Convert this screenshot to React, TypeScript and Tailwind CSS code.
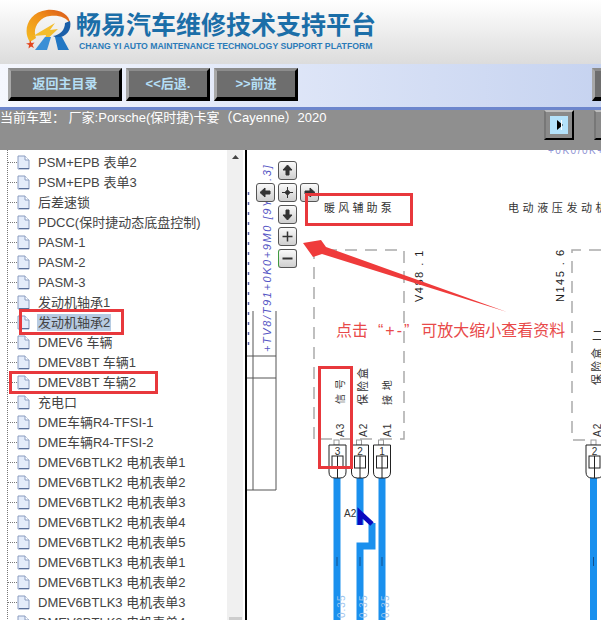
const CJK = "font-['Liberation_Sans','Noto_Sans_CJK_SC',sans-serif]";

const treeItems = [
  'PSM+EPB 表单2',
  'PSM+EPB 表单3',
  '后差速锁',
  'PDCC(保时捷动态底盘控制)',
  'PASM-1',
  'PASM-2',
  'PASM-3',
  '发动机轴承1',
  '发动机轴承2',
  'DMEV6 车辆',
  'DMEV8BT 车辆1',
  'DMEV8BT 车辆2',
  '充电口',
  'DME车辆R4-TFSI-1',
  'DME车辆R4-TFSI-2',
  'DMEV6BTLK2 电机表单1',
  'DMEV6BTLK2 电机表单2',
  'DMEV6BTLK2 电机表单3',
  'DMEV6BTLK2 电机表单4',
  'DMEV6BTLK2 电机表单5',
  'DMEV6BTLK3 电机表单1',
  'DMEV6BTLK3 电机表单2',
  'DMEV6BTLK3 电机表单3',
  'DMEV6BTLK3 电机表单4',
];

function Logo() {
  return (
    <svg width="50" height="44" viewBox="0 0 50 44" className="shrink-0">
      <defs>
        <linearGradient id="ring" x1="0" y1="1" x2="1" y2="0">
          <stop offset="0" stopColor="#f4bc22" />
          <stop offset="0.55" stopColor="#f0901a" />
          <stop offset="1" stopColor="#d8541a" />
        </linearGradient>
      </defs>
      <path d="M5 33 C-3 22 3 3 22 1 C34 0 45 5 45 15 C42 8 33 6 25 7 C14 8 7 20 11 29 Z" fill="url(#ring)" />
      <path d="M5 31l1.500 3 3-.5-2 2.500 1.500 3-3-1.500-2.500 2 .5-3.500-3-1.500 3.500-.5z" fill="#e2451f" />
      <path d="M8 27 L30 14 L25 21 L33 20 L19 33 L21 26 Z" fill="#f4bd2c" />
      <path d="M20 28 L26 28 L22 41 L10 41 Z" fill="#3a8fd6" />
      <path d="M45 12 C47 20 42 28 32 29 L28 27 C35 26 40 21 40 14 Z" fill="#1b5fa8" />
      <path d="M30 28 L37 28 L44 41 L33 41 Z" fill="#2277c4" />
    </svg>
  );
}

function NavButton({ label, className }: { label: string; className: string }) {
  return (
    <button
      className={`h-[33px] shrink-0 bg-[#6e6e6e] border-l-[3px] border-t-[3px] border-r-[3px] border-b-[4px] border-l-[#a8a8a8] border-t-[#8c8c8c] border-r-black border-b-black text-[13px] font-bold text-[#b5def5] ${className}`}
    >
      {label}
    </button>
  );
}

function PageIcon() {
  return (
    <svg width="13" height="15" viewBox="0 0 13 15" className="shrink-0">
      <path d="M1 1h7l4 4v9H1z" fill="#e4ecfa" stroke="#8a9cc0" />
      <path d="M8 1v4h4" fill="#fff" stroke="#8a9cc0" />
      <path d="M2 13.500h10" stroke="#5a6f99" />
    </svg>
  );
}

function TreeRow({ label, selected }: { label: string; selected: boolean }) {
  return (
    <div className="flex h-5 items-center">
      <div className="w-[10px] ml-[7px] border-t border-dotted border-[#777]" />
      <PageIcon />
      <span
        className={`ml-[7px] px-[1px] leading-[17px] whitespace-nowrap text-[13px] text-[#444] ${selected ? 'bg-[#b7cbe2]' : ''}`}
      >
        {label}
      </span>
    </div>
  );
}

function PadButton({ children, className = '' }: { children?: React.ReactNode; className?: string }) {
  return (
    <button
      className={`flex h-[19px] w-[19px] items-center justify-center rounded-[3px] border border-[#555] bg-gradient-to-b from-[#fafafa] to-[#cfcfcf] ${className}`}
    >
      <svg width="13" height="13" viewBox="0 0 13 13" fill="#333" stroke="#333">
        {children}
      </svg>
    </button>
  );
}

function Connector({ x, num }: { x: number; num: string }) {
  return (
    <g fill="none" stroke="#222" strokeWidth="1">
      <rect x={x + 5} y="440" width="5" height="5" stroke="#999" />
      <path d={`M${x} 445h17v27q0 6-6 6h-5q-6 0-6-6z`} fill="#fff" />
      <rect x={x + 3} y="456" width="11" height="12" />
      <path d={`M${x + 8.5} 456v22`} />
      <text x={x + 8.5} y="455" fontSize="10" textAnchor="middle" fill="#333" stroke="none">
        {num}
      </text>
    </g>
  );
}

function VLabel({ x, y, text, size = 10, fill = '#333', spacing = 1, italic = false }: { x: number; y: number; text: string; size?: number; fill?: string; spacing?: number; italic?: boolean }) {
  return (
    <text
      transform={`translate(${x} ${y}) rotate(-90)`}
      fontSize={size}
      fill={fill}
      letterSpacing={spacing}
      fontStyle={italic ? 'italic' : 'normal'}
      fontFamily="'Liberation Sans','Noto Sans CJK SC',sans-serif"
    >
      {text}
    </text>
  );
}

function Diagram() {
  return (
    <svg width="354" height="470" viewBox="247 150 354 470" className="absolute left-0 top-0">
      {/* title block on the left edge */}
      <g fill="none" stroke="#555" strokeWidth="1">
        <path d="M253 311V490M276 311V490M247 356H276M247 378H276M247 490H276" />
      </g>
      <VLabel x={271} y={352} text="+TV8/T91+0K0+9M0 [9Y0...3]" size={11} fill="#5555c4" spacing={1.6} italic />
      <path d="M248.500 192v160" stroke="#5d66a8" strokeWidth="1.500" strokeDasharray="3 7" />
      <text x="548" y="154" fontSize="10" fill="#8f94d4" letterSpacing="1.500">+0K0/0K+</text>

      {/* component boxes */}
      <g fill="none" stroke="#aaa" strokeWidth="1.500" strokeDasharray="12 8">
        <path d="M314 439V250H404V439H314" />
        <path d="M601 250H572V440H585" />
      </g>

      <text x="324" y="212" fontSize="11" fill="#333" letterSpacing="3.200" fontFamily="'Noto Sans CJK SC',sans-serif">暖风辅助泵</text>
      <text x="508" y="212" fontSize="11" fill="#333" letterSpacing="3.600" fontFamily="'Noto Sans CJK SC',sans-serif">电动液压发动机</text>

      <VLabel x={423} y={302} text="V488 . 1" size={11} fill="#222" spacing={1.500} />
      <VLabel x={564} y={302} text="N145 . 6" size={11} fill="#222" spacing={1.500} />

      <VLabel x={344} y={404} text="信 号" />
      <VLabel x={367} y={405} text="保险盒" size={11} spacing={2} />
      <VLabel x={391} y={405} text="接 地" />
      <VLabel x={344} y={437} text="A3" />
      <VLabel x={367} y={437} text="A2" />
      <VLabel x={391} y={437} text="A1" />
      <VLabel x={601} y={437} text="A2" />
      <text x="592" y="340" fontSize="12" fill="#333">二</text>
      <VLabel x={601} y={385} text="保险盒" size={11} spacing={2} />

      {/* wires */}
      <g fill="none" stroke="#1a90ee" strokeWidth="7">
        <path d="M337 478V620" />
        <path d="M360 478V525M372 523V546H360V620" />
        <path d="M382 478V620" />
        <path d="M593.500 478V620" />
      </g>
      <path d="M360 525V513L372 524" fill="none" stroke="#0a0ac0" strokeWidth="5" />
      <text x="344" y="517" fontSize="10" fill="#333">A2</text>
      <path d="M337 557v9M360 557v9M382 557v9M593.500 557v9" stroke="#12508c" strokeWidth="1" />
      <VLabel x={345} y={618} text="0.35" fill="#9cc4ee" />
      <VLabel x={367} y={618} text="0.35" fill="#9cc4ee" />
      <VLabel x={389} y={618} text="0.35" fill="#9cc4ee" />

      <Connector x={329} num="3" />
      <Connector x={351.5} num="2" />
      <Connector x={373.5} num="1" />
      <Connector x={586} num="2" />

      {/* red callout arrow */}
      <polygon points="303,243 321,240 326,247 507,312 322,254 313,257" fill="#ef3b3b" />
    </svg>
  );
}

export default function App() {
  return (
    <div className={`relative h-[620px] w-[601px] overflow-hidden bg-white ${CJK}`}>
      {/* Header */}
      <div className="flex h-[64px] items-start bg-gradient-to-b from-white to-[#dcdcdc] pl-[25px] pt-[9px]">
        <Logo />
        <div className="ml-[1px] flex flex-col">
          <div className="text-[25px] leading-[32px] font-bold whitespace-nowrap text-[#1b6ea8]">
            畅易汽车维修技术支持平台
          </div>
          <div className="ml-[3px] text-[8.7px] leading-[11px] font-bold whitespace-nowrap text-[#2b7bb9]">
            CHANG YI AUTO MAINTENANCE TECHNOLOGY SUPPORT PLATFORM
          </div>
        </div>
      </div>

      {/* Nav bar */}
      <div className="flex h-[46px] items-start gap-1 border-b-[3px] border-b-[#6d86cc] bg-gradient-to-r from-[#f5f7fe] to-[#c6d3f0] pl-2 pt-1">
        <NavButton label="返回主目录" className="w-[114px]" />
        <NavButton label="<<后退." className="w-[84px]" />
        <NavButton label=">>前进" className="w-[84px]" />
        <NavButton label="" className="ml-[290px] w-[30px]" />
      </div>

      {/* Current vehicle bar */}
      <div className="flex h-[40px] items-start bg-[#8f8f8f]">
        <div className="w-[326px] shrink-0 text-[13px] leading-[16px] whitespace-nowrap text-white">
          当前车型： 厂家:Porsche(保时捷)卡宴（Cayenne）2020
        </div>
        <div className="ml-[218px] flex h-[30px] w-[30px] shrink-0 items-center justify-center border-2 border-t-[#bdbdbd] border-l-[#777] border-r-black border-b-black bg-[#8a8a8a]">
          <div className="flex h-[18px] w-[18px] items-center justify-center bg-[#b4e2fb]">
            <svg width="10" height="10" viewBox="0 0 10 10">
              <path d="M3 0l6 5-6 5z" fill="#000" />
              <path d="M7.500 0v10" stroke="#fff" />
            </svg>
          </div>
        </div>
        <div className="ml-[20px] h-[30px] w-[30px] shrink-0 border-2 border-t-[#bdbdbd] border-l-[#777] border-r-black border-b-black bg-[#8a8a8a]" />
      </div>

      {/* Body */}
      <div className="flex h-[471px]">
        {/* Tree */}
        <div className="flex w-[245px] shrink-0">
          <div className="relative w-[227px] overflow-hidden">
            <div className="absolute bottom-0 left-[7px] top-0 border-l border-dotted border-[#777]" />
            <div className="pt-[2px]">
              {treeItems.map((item) => (
                <TreeRow key={item} label={item} selected={item === '发动机轴承2'} />
              ))}
            </div>
          </div>
          <div className="flex w-[16px] flex-col items-center justify-between bg-[#f0f0f0] pt-[5px]">
            <svg width="7" height="4" viewBox="0 0 7 4">
              <path d="M3.500 0L7 4H0z" fill="#444" />
            </svg>
            <div className="h-[4px] w-[13px] bg-[#cdcdcd]" />
          </div>
          <div className="w-[2px] bg-white" />
        </div>
        <div className="w-[2px] shrink-0 bg-black" />

        {/* Wiring diagram canvas */}
        <div className="relative flex-1 overflow-hidden">
          <Diagram />
          <div className="absolute left-[9px] top-[11px] grid grid-cols-[19px_19px_19px] gap-[3px]">
            <div />
            <PadButton><path d="M6.500 1L11 6H8v5H5V6H2z" /></PadButton>
            <div />
            <PadButton><path d="M1 6.500L6 2v3h5v3H6v3z" /></PadButton>
            <PadButton><path d="M6.500 1v11M1 6.500h11" fill="none" /><circle cx="6.500" cy="6.500" r="2" /></PadButton>
            <PadButton><path d="M12 6.500L7 2v3H2v3h5v3z" /></PadButton>
            <div />
            <PadButton><path d="M6.500 12L11 7H8V2H5v5H2z" /></PadButton>
            <div />
            <div />
            <PadButton><path d="M6.500 1.500v10M1.500 6.500h10" fill="none" strokeWidth="1.500" /></PadButton>
            <div />
            <div />
            <PadButton className="border-l-[#3f9a3f]"><path d="M1.500 6.500h10" fill="none" strokeWidth="2" /></PadButton>
            <div />
          </div>
          <div className="absolute left-[89px] top-[171px] whitespace-nowrap text-[16px] leading-[20px] text-[#e84a4a]">
            点击<span className="mx-[10px] tracking-[2px]">“+-”</span>可放大缩小查看资料
          </div>
        </div>
      </div>

      {/* Red annotation frames */}
      <div className="absolute left-[19px] top-[309px] h-[26px] w-[105px] border-[3px] border-[#e8383c]" />
      <div className="absolute left-[9px] top-[371px] h-[23px] w-[149px] border-[3px] border-[#e8383c]" />
      <div className="absolute left-[305px] top-[193px] h-[33px] w-[108px] border-[3px] border-[#e8383c]" />
      <div className="absolute left-[318px] top-[366px] h-[103px] w-[35px] border-[3px] border-[#e8383c]" />
    </div>
  );
}
